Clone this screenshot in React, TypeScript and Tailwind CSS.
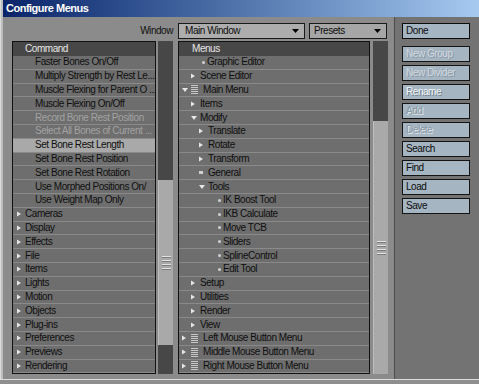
import React from "react";

function RightArrow() {
  return (
    <svg width="4" height="6" viewBox="0 0 4 6" className="shrink-0">
      <path d="M0 0.5L4 3L0 5.5Z" fill="#e6e6e6" />
    </svg>
  );
}

function DownArrow() {
  return (
    <svg width="6" height="4" viewBox="0 0 6 4" className="shrink-0">
      <path d="M0 0H6L3 4Z" fill="#e6e6e6" />
    </svg>
  );
}

function Bullet() {
  return <span className="w-[3px] h-[3px] rounded-full bg-[#d0d0d0] shrink-0" />;
}

function Dash() {
  return <span className="w-[4px] h-[3px] bg-[#d0d0d0] shrink-0" />;
}

function ListIcon() {
  return (
    <svg width="7" height="9" viewBox="0 0 7 9" className="shrink-0">
      <rect x="0" y="0" width="7" height="1" fill="#c8c8c8" />
      <rect x="0" y="2" width="7" height="1" fill="#c8c8c8" />
      <rect x="0" y="4" width="7" height="1" fill="#c8c8c8" />
      <rect x="0" y="6" width="7" height="1" fill="#c8c8c8" />
      <rect x="0" y="8" width="7" height="1" fill="#c8c8c8" />
    </svg>
  );
}

function DropTri() {
  return (
    <svg width="7" height="4" viewBox="0 0 7 4" className="shrink-0">
      <path d="M0 0H7L3.5 4Z" fill="#000" />
    </svg>
  );
}

type LeftRow = { t: string; k: "cmd" | "dis" | "sel" | "cat" };

const leftRows: LeftRow[] = [
  { t: "Faster Bones On/Off", k: "cmd" },
  { t: "Multiply Strength by Rest Le...", k: "cmd" },
  { t: "Muscle Flexing for Parent O ...", k: "cmd" },
  { t: "Muscle Flexing On/Off", k: "cmd" },
  { t: "Record Bone Rest Position", k: "dis" },
  { t: "Select All Bones of Current ...", k: "dis" },
  { t: "Set Bone Rest Length", k: "sel" },
  { t: "Set Bone Rest Position", k: "cmd" },
  { t: "Set Bone Rest Rotation", k: "cmd" },
  { t: "Use Morphed Positions On/", k: "cmd" },
  { t: "Use Weight Map Only", k: "cmd" },
  { t: "Cameras", k: "cat" },
  { t: "Display", k: "cat" },
  { t: "Effects", k: "cat" },
  { t: "File", k: "cat" },
  { t: "Items", k: "cat" },
  { t: "Lights", k: "cat" },
  { t: "Motion", k: "cat" },
  { t: "Objects", k: "cat" },
  { t: "Plug-ins", k: "cat" },
  { t: "Preferences", k: "cat" },
  { t: "Previews", k: "cat" },
  { t: "Rendering", k: "cat" },
];

type MidRow = { t: string; pad: string; icon: React.ReactNode; gap: string };

const midRows: MidRow[] = [
  { t: "Graphic Editor", pad: "pl-[23px]", icon: <Bullet />, gap: "ml-[2px]" },
  { t: "Scene Editor", pad: "pl-[12px]", icon: <RightArrow />, gap: "ml-[5px]" },
  {
    t: "Main Menu",
    pad: "pl-[3px]",
    icon: (
      <>
        <DownArrow />
        <span className="ml-[3px] flex">
          <ListIcon />
        </span>
      </>
    ),
    gap: "ml-[5px]",
  },
  { t: "Items", pad: "pl-[12px]", icon: <RightArrow />, gap: "ml-[5px]" },
  { t: "Modify", pad: "pl-[12px]", icon: <DownArrow />, gap: "ml-[3px]" },
  { t: "Translate", pad: "pl-[20px]", icon: <RightArrow />, gap: "ml-[5px]" },
  { t: "Rotate", pad: "pl-[20px]", icon: <RightArrow />, gap: "ml-[5px]" },
  { t: "Transform", pad: "pl-[20px]", icon: <RightArrow />, gap: "ml-[5px]" },
  { t: "General", pad: "pl-[20px]", icon: <Dash />, gap: "ml-[5px]" },
  { t: "Tools", pad: "pl-[20px]", icon: <DownArrow />, gap: "ml-[3px]" },
  { t: "IK Boost Tool", pad: "pl-[39px]", icon: <Bullet />, gap: "ml-[2px]" },
  { t: "IKB Calculate", pad: "pl-[39px]", icon: <Bullet />, gap: "ml-[2px]" },
  { t: "Move TCB", pad: "pl-[39px]", icon: <Bullet />, gap: "ml-[2px]" },
  { t: "Sliders", pad: "pl-[39px]", icon: <Bullet />, gap: "ml-[2px]" },
  { t: "SplineControl", pad: "pl-[39px]", icon: <Bullet />, gap: "ml-[2px]" },
  { t: "Edit Tool", pad: "pl-[39px]", icon: <Bullet />, gap: "ml-[2px]" },
  { t: "Setup", pad: "pl-[12px]", icon: <RightArrow />, gap: "ml-[5px]" },
  { t: "Utilities", pad: "pl-[12px]", icon: <RightArrow />, gap: "ml-[5px]" },
  { t: "Render", pad: "pl-[12px]", icon: <RightArrow />, gap: "ml-[5px]" },
  { t: "View", pad: "pl-[12px]", icon: <RightArrow />, gap: "ml-[5px]" },
  {
    t: "Left Mouse Button Menu",
    pad: "pl-[3px]",
    icon: (
      <>
        <RightArrow />
        <span className="ml-[5px] flex">
          <ListIcon />
        </span>
      </>
    ),
    gap: "ml-[5px]",
  },
  {
    t: "Middle Mouse Button Menu",
    pad: "pl-[3px]",
    icon: (
      <>
        <RightArrow />
        <span className="ml-[5px] flex">
          <ListIcon />
        </span>
      </>
    ),
    gap: "ml-[5px]",
  },
  {
    t: "Right Mouse Button Menu",
    pad: "pl-[3px]",
    icon: (
      <>
        <RightArrow />
        <span className="ml-[5px] flex">
          <ListIcon />
        </span>
      </>
    ),
    gap: "ml-[5px]",
  },
];

type Btn = { t: string; s: "on" | "dim" | "white" | "off" };
const buttons: Btn[] = [
  { t: "New Group", s: "dim" },
  { t: "New Divider", s: "dim" },
  { t: "Rename", s: "white" },
  { t: "Add", s: "off" },
  { t: "Delete", s: "off" },
  { t: "Search", s: "on" },
  { t: "Find", s: "on" },
  { t: "Load", s: "on" },
  { t: "Save", s: "on" },
];

function btnText(s: Btn["s"]) {
  if (s === "dim") return "text-[#d2dae0] [text-shadow:1px_1px_0_#8796a2]";
  if (s === "white") return "text-[#f4f7f9] [text-shadow:1px_1px_0_#6f7d88]";
  if (s === "off") return "text-[#8797a3] [text-shadow:1px_1px_0_#e4eaee]";
  return "text-[#0c0c0c]";
}

function Grip() {
  return (
    <div className="flex flex-col items-center gap-[2px]">
      <div className="w-[9px] h-[1px] bg-[#e2e2e2] shadow-[0_1px_0_#7c7c7c]" />
      <div className="w-[9px] h-[1px] bg-[#e2e2e2] shadow-[0_1px_0_#7c7c7c] mt-[1px]" />
      <div className="w-[9px] h-[1px] bg-[#e2e2e2] shadow-[0_1px_0_#7c7c7c] mt-[1px]" />
      <div className="w-[9px] h-[1px] bg-[#e2e2e2] shadow-[0_1px_0_#7c7c7c] mt-[1px]" />
    </div>
  );
}

export default function App() {
  return (
    <div className="w-[479px] h-[384px] flex flex-col overflow-hidden bg-[#8b8b8b] font-['Liberation_Sans',Arial,sans-serif] text-[10px] tracking-[-0.45px] text-[#0e0e0e] leading-none">
      <div className="flex h-[379px] shrink-0">
        <div className="w-[3px] shrink-0 bg-[#bdbdbd] border-l border-[#dcdcdc]" />
        <div className="flex-1 flex flex-col min-w-0">
          <div className="h-[17px] shrink-0 bg-linear-to-r from-[#0a246a] to-[#a6caf0] flex items-center pl-[3px] text-white font-bold text-[11px] tracking-[-0.5px]">
            Configure Menus
          </div>
          <div className="flex flex-1 min-h-0">
            {/* main area */}
            <div className="w-[391px] shrink-0 flex flex-col pt-[6px]">
              <div className="flex items-center justify-end pr-[7px] h-[16px]">
                <span className="mr-[5px] text-[#111]">Window</span>
                <div className="w-[127px] h-[16px] border border-[#1a1a1a] bg-[#adadad] flex items-center justify-between pl-[6px] pr-[5px]">
                  <span>Main Window</span>
                  <DropTri />
                </div>
                <div className="ml-[4px] w-[78px] h-[16px] border border-[#1a1a1a] bg-[#a6a6a6] flex items-center justify-between pl-[4px] pr-[5px]">
                  <span>Presets</span>
                  <DropTri />
                </div>
              </div>

              <div className="flex mt-[2px] pl-[9px]">
                {/* left list */}
                <div className="w-[144px] border border-[#111] bg-[#6e6e6e] flex flex-col">
                  <div className="h-[14px] bg-[#474747] text-[#e6e6e6] pl-[12px] flex items-center">
                    Command
                  </div>
                  {leftRows.map((r, i) => (
                    <div
                      key={i}
                      className={
                        "h-[13.8px] border-b border-[#8a8a8a] flex items-center whitespace-nowrap overflow-hidden " +
                        (r.k === "sel" ? "bg-[#a9a9a9] " : "") +
                        (r.k === "cat" ? "pl-[4px]" : "pl-[22px]")
                      }
                    >
                      {r.k === "cat" && <RightArrow />}
                      <span
                        className={
                          (r.k === "cat" ? "ml-[4px] " : "") +
                          (r.k === "dis" ? "text-[#a2a2a2]" : "text-[#0e0e0e]")
                        }
                      >
                        {r.t}
                      </span>
                    </div>
                  ))}
                </div>

                {/* left scrollbar */}
                <div className="ml-[2px] w-[15px] bg-[#474747] flex flex-col">
                  <div className="h-[139px] shrink-0" />
                  <div className="h-[165px] shrink-0 bg-[#a9a9a9] border-l border-[#bebebe] flex items-center justify-center">
                    <Grip />
                  </div>
                </div>

                {/* middle list */}
                <div className="ml-[5px] w-[192px] border border-[#111] bg-[#6e6e6e] flex flex-col">
                  <div className="h-[14px] bg-[#474747] text-[#e6e6e6] pl-[13px] flex items-center">
                    Menus
                  </div>
                  {midRows.map((r, i) => (
                    <div
                      key={i}
                      className={
                        "h-[13.8px] border-b border-[#8a8a8a] flex items-center whitespace-nowrap overflow-hidden " +
                        r.pad
                      }
                    >
                      {r.icon}
                      <span className={r.gap}>{r.t}</span>
                    </div>
                  ))}
                </div>

                {/* middle scrollbar */}
                <div className="ml-[3px] w-[15px] bg-[#474747] flex flex-col">
                  <div className="h-[80px] shrink-0" />
                  <div className="flex-1 bg-[#a9a9a9] border-l border-[#bebebe] flex items-center justify-center">
                    <Grip />
                  </div>
                </div>
              </div>
            </div>

            {/* right panel */}
            <div className="flex-1 border-l border-[#4c4c4c] bg-[#737373] pl-[7px] pt-[6px] flex flex-col">
              <div className="w-[68px] h-[16px] border border-[#0c0c0c] bg-[#a5b5c2] pl-[3px] flex items-center text-[#0c0c0c]">
                Done
              </div>
              <div className="mt-[7px] flex flex-col gap-[3px]">
                {buttons.map((b) => (
                  <div
                    key={b.t}
                    className={
                      "w-[68px] h-[16px] border border-[#141414] bg-[#a5b5c2] pl-[3px] flex items-center " +
                      btnText(b.s)
                    }
                  >
                    {b.t}
                  </div>
                ))}
              </div>
            </div>
          </div>
        </div>
      </div>
      <div className="flex-1 border-t border-[#dcdcdc] bg-[#8e8e8e]" />
    </div>
  );
}
